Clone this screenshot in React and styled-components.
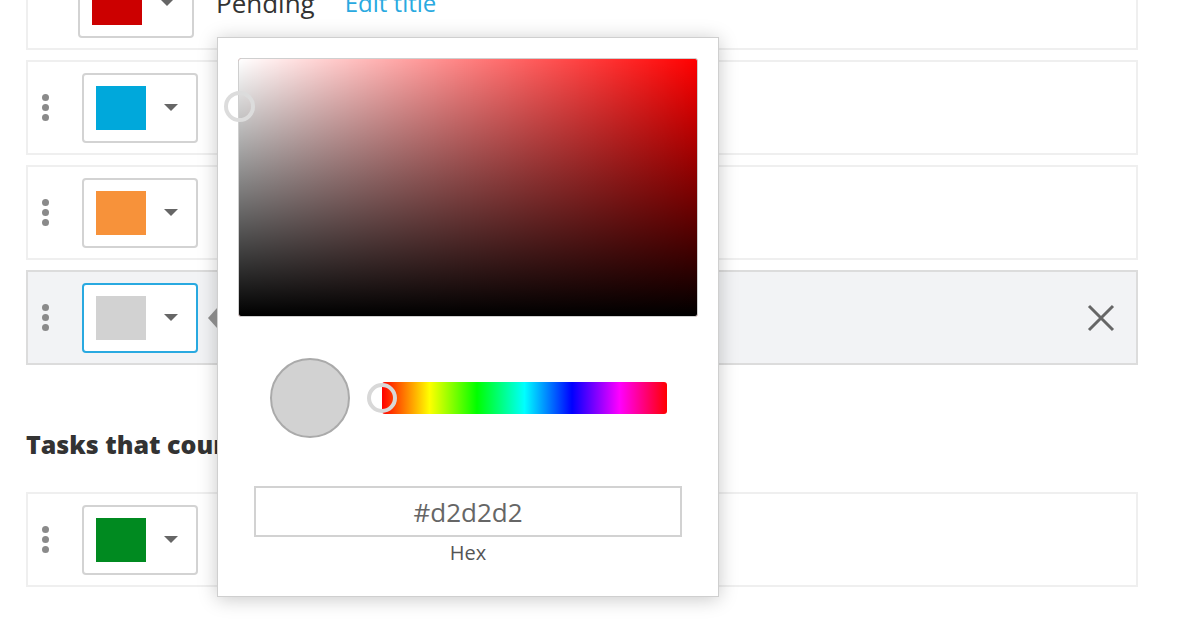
import React from "react";
import styled, { createGlobalStyle } from "styled-components";

const GlobalStyle = createGlobalStyle`
  html, body {
    margin: 0;
    padding: 0;
    background: #fff;
    font-family: "Open Sans", "Liberation Sans", sans-serif;
  }
`;

const rows = [
  { id: 1, color: "#cc0000", title: "Pending", editable: true, noHandle: true },
  { id: 2, color: "#00a8db", title: "" },
  { id: 3, color: "#f7923a", title: "" },
  { id: 4, color: "#d2d2d2", title: "", active: true },
];

const doneRows = [{ id: 5, color: "#008a20", title: "" }];

function Row({ item }) {
  return (
    <StatusRow $active={item.active} $noHandle={item.noHandle}>
      {!item.noHandle && (
        <Handle>
          <Dot />
          <Dot />
          <Dot />
        </Handle>
      )}
      <ColorButton $active={item.active}>
        <Swatch $color={item.color} />
        <Caret />
      </ColorButton>
      {item.title && <Title>{item.title}</Title>}
      {item.editable && <EditLink>Edit title</EditLink>}
      {item.active && (
        <CloseButton>
          <svg width="28" height="28" viewBox="0 0 28 28">
            <path d="M2 2 L26 26 M26 2 L2 26" stroke="#666" strokeWidth="3" fill="none" />
          </svg>
        </CloseButton>
      )}
    </StatusRow>
  );
}

function ColorPicker() {
  return (
    <Popover>
      <Arrow />
      <Saturation>
        <SatPointer />
      </Saturation>
      <HueRow>
        <Preview $color="#d2d2d2" />
        <HueBar>
          <HuePointer />
        </HueBar>
      </HueRow>
      <HexInput defaultValue="#d2d2d2" readOnly />
      <HexLabel>Hex</HexLabel>
    </Popover>
  );
}

export default function App() {
  return (
    <>
      <GlobalStyle />
      <Page>
        <List>
          {rows.map((r) => (
            <Row key={r.id} item={r} />
          ))}
        </List>
        <SectionTitle>Tasks that count as complete</SectionTitle>
        <List>
          {doneRows.map((r) => (
            <Row key={r.id} item={r} />
          ))}
        </List>
        <ColorPicker />
      </Page>
    </>
  );
}

const Page = styled.div`
  position: relative;
  height: 620px;
  overflow: hidden;
  padding: 0 66px 0 26px;
`;

const List = styled.div`
  display: flex;
  flex-direction: column;
  gap: 10px;
  &:first-child {
    margin-top: -45px;
  }
`;

const StatusRow = styled.div`
  display: flex;
  align-items: center;
  box-sizing: border-box;
  height: 95px;
  padding: 0 21px 0 ${(p) => (p.$noHandle ? "50px" : "0")};
  border: 2px solid ${(p) => (p.$active ? "#dcdcdc" : "#efefef")};
  background: ${(p) => (p.$active ? "#f2f3f5" : "#fff")};
`;

const Handle = styled.div`
  width: 34px;
  margin-right: 20px;
  display: flex;
  flex-direction: column;
  align-items: center;
  gap: 3px;
`;

const Dot = styled.span`
  width: 7px;
  height: 7px;
  border-radius: 50%;
  background: #8a8a8a;
`;

const ColorButton = styled.div`
  box-sizing: border-box;
  width: 116px;
  height: 70px;
  display: flex;
  align-items: center;
  padding: 0 18px 0 12px;
  border: 2px solid ${(p) => (p.$active ? "#29a9e0" : "#d3d3d3")};
  border-radius: 4px;
  background: #fff;
  flex-shrink: 0;
`;

const Swatch = styled.span`
  width: 50px;
  height: 44px;
  background: ${(p) => p.$color};
`;

const Caret = styled.span`
  margin-left: 18px;
  width: 0;
  height: 0;
  border-left: 7px solid transparent;
  border-right: 7px solid transparent;
  border-top: 7px solid #666;
`;

const Title = styled.span`
  margin-left: 22px;
  font-size: 26px;
  color: #333;
`;

const EditLink = styled.span`
  margin-left: 30px;
  font-size: 24px;
  color: #29a9e0;
`;

const CloseButton = styled.span`
  margin-left: auto;
  display: flex;
`;

const SectionTitle = styled.h2`
  margin: 63px 0 32px;
  font-size: 25px;
  line-height: 32px;
  font-weight: 800;
  color: #333;
`;

const Popover = styled.div`
  position: absolute;
  left: 217px;
  top: 37px;
  box-sizing: border-box;
  width: 502px;
  height: 560px;
  padding: 20px;
  background: #fff;
  border: 1px solid #cfcfcf;
  box-shadow: 0 2px 18px rgba(0, 0, 0, 0.22);
  display: flex;
  flex-direction: column;
`;

const Arrow = styled.span`
  position: absolute;
  left: -10px;
  top: 270px;
  width: 0;
  height: 0;
  border-top: 10px solid transparent;
  border-bottom: 10px solid transparent;
  border-right: 9px solid #888;
`;

const Saturation = styled.div`
  position: relative;
  box-sizing: border-box;
  height: 259px;
  border: 1px solid #cfcfcf;
  border-radius: 3px;
  background: linear-gradient(to top, #000, rgba(0, 0, 0, 0)),
    linear-gradient(to right, #fff, rgba(255, 255, 255, 0)), #f00;
`;

const SatPointer = styled.span`
  position: absolute;
  left: -15px;
  top: 32px;
  width: 31px;
  height: 31px;
  box-sizing: border-box;
  border: 4px solid #dcdcdc;
  border-radius: 50%;
`;

const HueRow = styled.div`
  display: flex;
  align-items: center;
  gap: 32px;
  margin-top: 41px;
  padding: 0 31px 0 32px;
`;

const Preview = styled.span`
  width: 80px;
  height: 80px;
  box-sizing: border-box;
  border-radius: 50%;
  border: 2px solid #aaa;
  background: ${(p) => p.$color};
  flex-shrink: 0;
`;

const HueBar = styled.div`
  position: relative;
  flex: 1;
  height: 32px;
  border-radius: 3px;
  background: linear-gradient(to right, #f00, #ff0, #0f0, #0ff, #00f, #f0f, #f00);
`;

const HuePointer = styled.span`
  position: absolute;
  left: -15px;
  top: 1px;
  width: 30px;
  height: 30px;
  box-sizing: border-box;
  border: 4px solid #d8d8d8;
  border-radius: 50%;
`;

const HexInput = styled.input`
  box-sizing: border-box;
  margin: 48px 16px 0;
  height: 51px;
  border: 2px solid #d2d2d2;
  border-radius: 0;
  outline: none;
  text-align: center;
  font-family: "Open Sans", "Liberation Sans", sans-serif;
  font-size: 26px;
  color: #666;
  background: #fff;
`;

const HexLabel = styled.div`
  margin-top: 4px;
  text-align: center;
  font-size: 20px;
  line-height: 24px;
  color: #555;
`;
